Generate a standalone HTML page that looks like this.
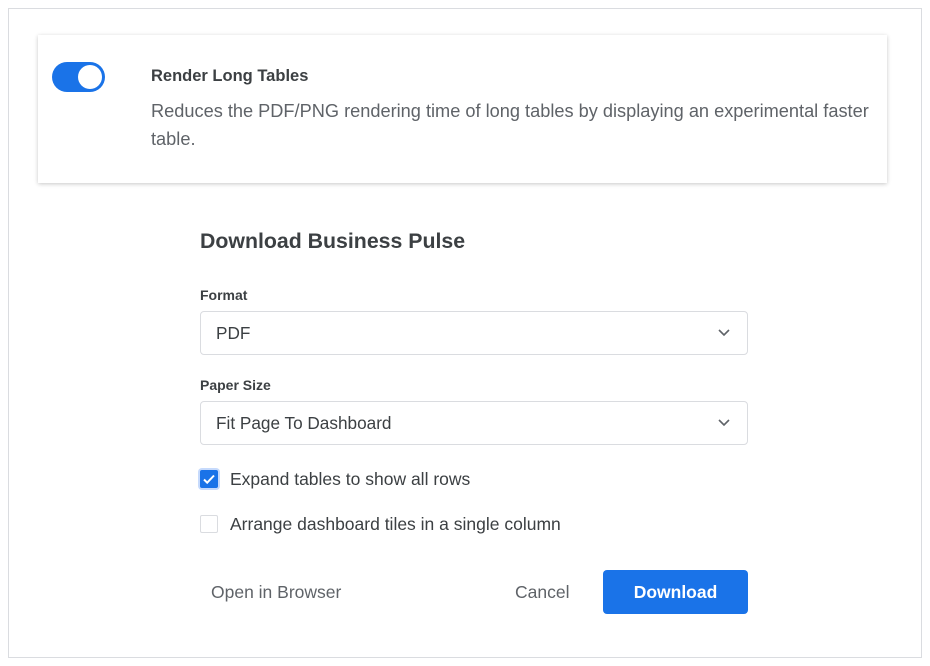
<!DOCTYPE html>
<html><head><style>
body{margin:0;width:930px;height:666px;background:#fff;font-family:"Liberation Sans",sans-serif;position:relative;overflow:hidden;color:#3c4043}
.abs{position:absolute}
.frame{left:8px;top:8px;width:914px;height:650px;border:1px solid #dadce0;box-sizing:border-box}
.card{left:38px;top:35px;width:849px;height:148px;background:#fff;box-shadow:0 1px 4px rgba(0,0,0,.22)}
.tog{left:52px;top:62px;width:53px;height:30px;border-radius:15px;background:#1a73e8}
.knob{left:78px;top:65px;width:24px;height:24px;border-radius:50%;background:#fff}
.sel{left:200px;width:548px;height:44px;border:1px solid #dadce0;border-radius:4px;box-sizing:border-box;font-size:17.2px;padding-left:15px;line-height:42px;color:#3c4043}
.lbl{font-size:14px;font-weight:bold;left:200px}
.cb{left:200px;width:18px;height:18px;border-radius:2px;box-sizing:border-box}
.txt{font-size:17.5px;left:230px}
</style></head><body>
<div class="abs frame"></div>
<div class="abs card"></div>
<div class="abs tog"></div>
<div class="abs knob"></div>
<div class="abs" style="left:151px;top:67px;font-size:16.5px;font-weight:bold">Render Long Tables</div>
<div class="abs" style="left:151px;top:97px;width:732px;font-size:18.2px;line-height:28px;color:#5f6368">Reduces the PDF/PNG rendering time of long tables by displaying an experimental faster table.</div>
<div class="abs" style="left:200px;top:229px;font-size:21.3px;font-weight:bold;color:#3c4043">Download Business Pulse</div>
<div class="abs lbl" style="top:287px">Format</div>
<div class="abs sel" style="top:311px">PDF</div>
<div class="abs lbl" style="top:377px">Paper Size</div>
<div class="abs sel" style="top:401px">Fit Page To Dashboard</div>
<svg class="abs" style="left:716px;top:325px" width="16" height="16"><path d="M3 5l5 5 5-5" fill="none" stroke="#5f6368" stroke-width="1.6"/></svg>
<svg class="abs" style="left:716px;top:415px" width="16" height="16"><path d="M3 5l5 5 5-5" fill="none" stroke="#5f6368" stroke-width="1.6"/></svg>
<div class="abs cb" style="top:470px;background:#1a73e8;box-shadow:0 0 0 2px #c6dafc"><svg width="18" height="18" style="display:block"><path d="M4 9.5l3.2 3.2L14 5.5" fill="none" stroke="#fff" stroke-width="2"/></svg></div>
<div class="abs txt" style="top:469px">Expand tables to show all rows</div>
<div class="abs cb" style="top:515px;border:1px solid #dadce0"></div>
<div class="abs txt" style="top:514px">Arrange dashboard tiles in a single column</div>
<div class="abs" style="left:211px;top:582px;font-size:17.5px;color:#5f6368">Open in Browser</div>
<div class="abs" style="left:515px;top:582px;font-size:17.5px;color:#5f6368">Cancel</div>
<div class="abs" style="left:603px;top:570px;width:145px;height:44px;border-radius:4px;background:#1a73e8;color:#fff;font-size:17.5px;font-weight:bold;text-align:center;line-height:44px">Download</div>
</body></html>
